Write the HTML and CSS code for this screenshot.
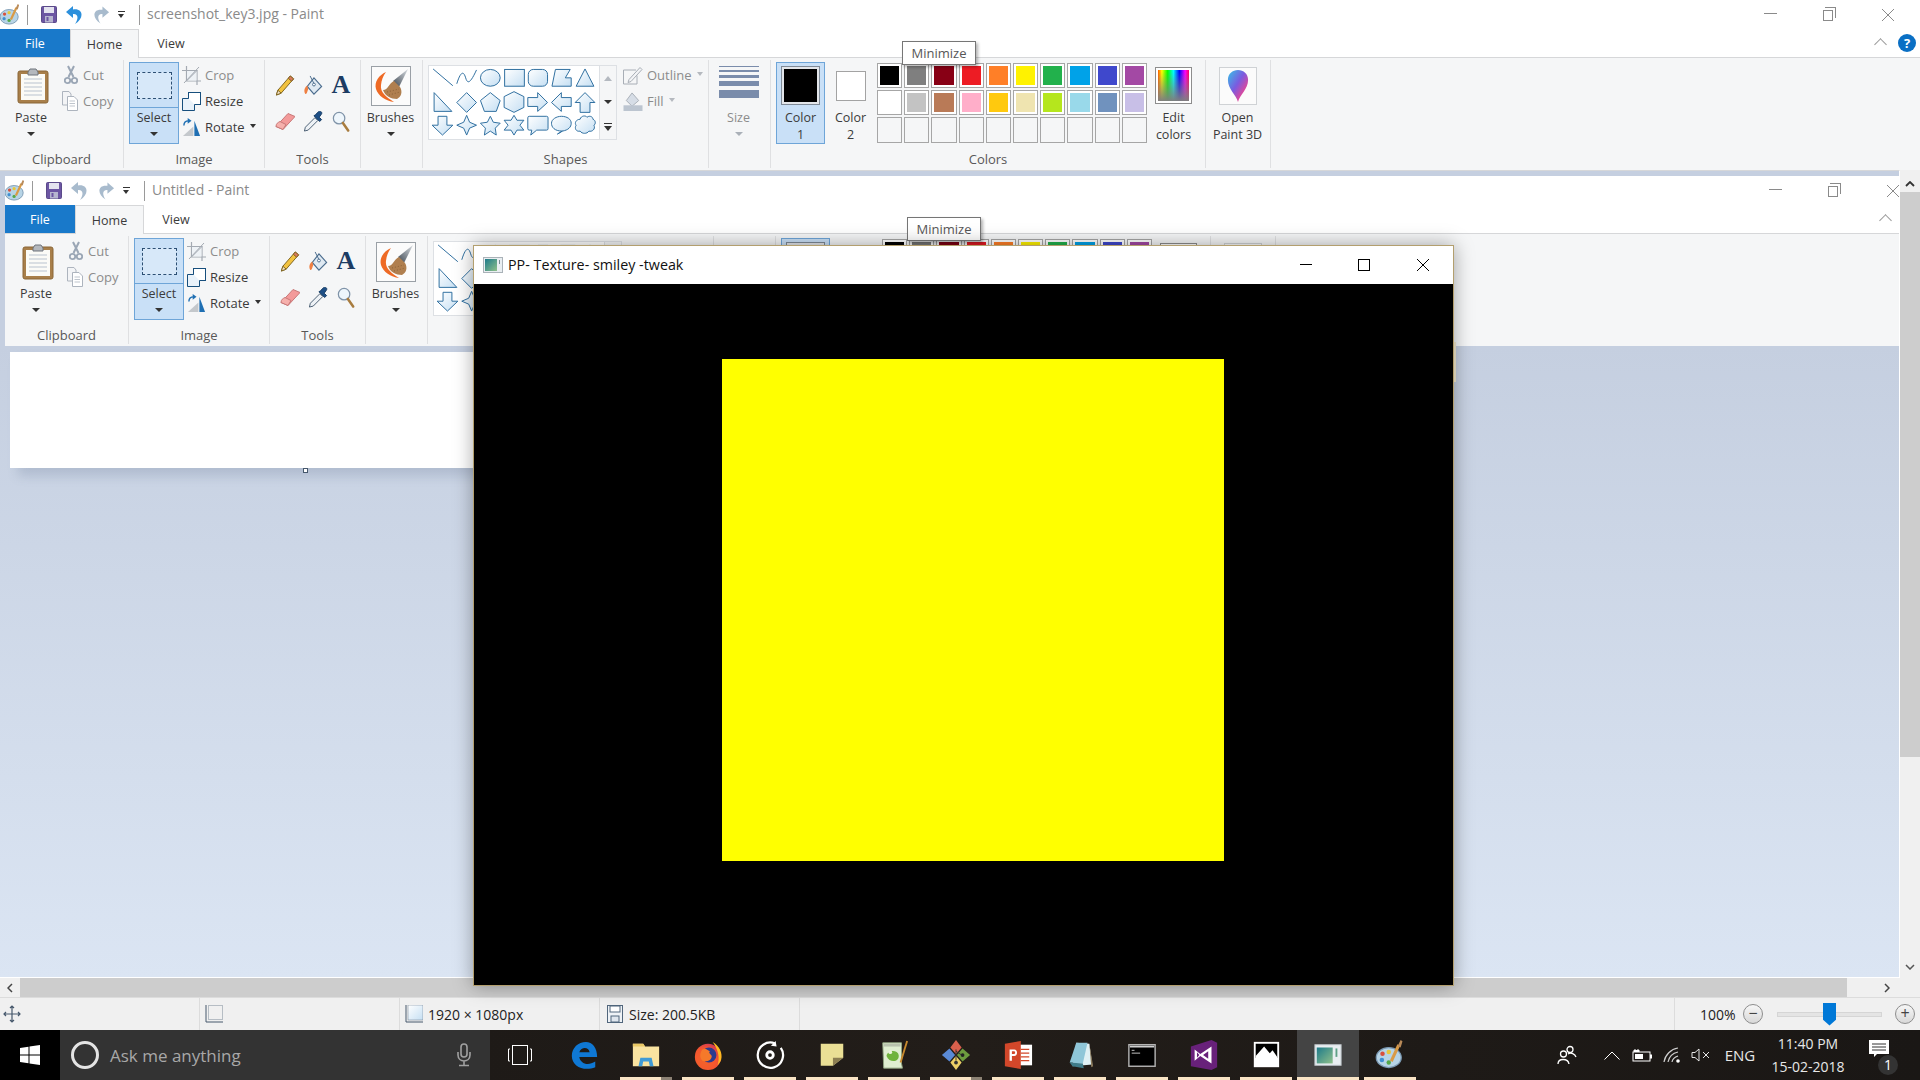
FILE: index.html
```html
<!DOCTYPE html>
<html lang="en">
<head>
<meta charset="utf-8">
<title>Paint</title>
<link rel="stylesheet" href="styles.css">
</head>
<body>
<svg class="sprite" aria-hidden="true">
  <defs>
    <linearGradient id="gShape" x1="0" y1="0" x2="1" y2="1"><stop offset="0" stop-color="#ffffff"/><stop offset="1" stop-color="#c5dff3"/></linearGradient>
    <linearGradient id="g3d" x1="0" y1="0" x2="1" y2="1"><stop offset="0" stop-color="#35c3e8"/><stop offset=".45" stop-color="#7a5be0"/><stop offset=".75" stop-color="#e0479a"/><stop offset="1" stop-color="#f08a30"/></linearGradient>
    <linearGradient id="gTeal" x1="0" y1="0" x2="1" y2="1"><stop offset="0" stop-color="#1d7a8a"/><stop offset="1" stop-color="#8fc08a"/></linearGradient>
    <linearGradient id="gHandle" x1="0" y1="1" x2="1" y2="0"><stop offset="0" stop-color="#3d4650"/><stop offset="1" stop-color="#d8dde2"/></linearGradient>
    <radialGradient id="gFox" cx=".35" cy=".65" r=".8"><stop offset="0" stop-color="#f2622a"/><stop offset=".6" stop-color="#f4562e"/><stop offset="1" stop-color="#c22a6a"/></radialGradient>
    <symbol id="logo" viewBox="0 0 22 24"><ellipse cx="10" cy="14" rx="10" ry="8" fill="#b7d4e6" stroke="#7a98b2"/><circle cx="5" cy="11" r="1.800" fill="#d8503c"/><circle cx="10" cy="9.500" r="1.800" fill="#e8c73a"/><circle cx="4.500" cy="16" r="1.800" fill="#3f8fd2"/><circle cx="10" cy="18" r="1.800" fill="#55a84a"/><path d="M12 17 L18 4" stroke="#d99a45" stroke-width="2.400"/><path d="M17 5 L19.500 0 L21 1 L19.500 6Z" fill="#b98a58"/></symbol>
    <symbol id="save" viewBox="0 0 16 17"><rect x=".5" y=".5" width="15" height="16" rx="1" fill="#6c56a3" stroke="#5b4a8a"/><rect x="3" y="1" width="10" height="6" fill="#e4e3ef"/><rect x="4" y="10" width="8" height="6.500" fill="#b7b6cf"/><rect x="5.500" y="11" width="2" height="4" fill="#6c56a3"/></symbol>
    <symbol id="undo" viewBox="0 0 18 20"><path d="M8 1 L1 7 L8 13 V9 C13 8.500 14 13 10 19 C19 14 19 3 8 4.500Z" fill="currentColor"/></symbol>
    <symbol id="redo" viewBox="0 0 18 20"><path d="M10 1 L17 7 L10 13 V9 C5 8.500 4 13 8 19 C-1 14 -1 3 10 4.500Z" fill="#a8bbcd"/></symbol>
    <symbol id="paste" viewBox="0 0 32 37"><rect x="1" y="4" width="30" height="32" rx="2" fill="#a87f4a" stroke="#8a6636"/><rect x="4" y="7" width="24" height="26" fill="#fbfbf7"/><path d="M7 12H25M7 16H25M7 20H25M7 24H25M7 28H25" stroke="#b9c3cf"/><path d="M11 5 L13 2 H19 L21 5 V8 H11Z" fill="#b4b8bd" stroke="#6f757c"/></symbol>
    <symbol id="cut" viewBox="0 0 14 20"><path d="M4 1 L9.500 12 M10 1 L4.500 12" stroke="#9aa6b5" stroke-width="2"/><circle cx="3.500" cy="15.500" r="2.700" fill="none" stroke="#9aa6b5" stroke-width="1.800"/><circle cx="10.500" cy="15.500" r="2.700" fill="none" stroke="#9aa6b5" stroke-width="1.800"/></symbol>
    <symbol id="copy" viewBox="0 0 16 20"><path d="M.5.5H7L9 3V14H.5Z" fill="#f3f4f6" stroke="#adb4be"/><path d="M5.500 5.500H12L15.500 9V19.500H5.500Z" fill="#fff" stroke="#adb4be"/><path d="M7.500 10H13M7.500 12.500H13M7.500 15H13" stroke="#bfc5cd"/></symbol>
    <symbol id="crop" viewBox="0 0 19 19"><path d="M4.500 0V15H19M0 4.500H15V19" fill="none" stroke="#a4aab2" stroke-width="1.200"/><rect x="5" y="5" width="9.500" height="9.500" fill="#eef2f6"/><path d="M4.500 15 L15 4.500 M17 1 L2 17" stroke="#a4aab2"/></symbol>
    <symbol id="resize" viewBox="0 0 19 19"><rect x="6.500" y=".5" width="12" height="12" fill="#fff" stroke="#174f7d"/><path d="M6.500 6.500H.5V18.500H12.500V12.500" fill="#e9f2fa" stroke="#174f7d"/></symbol>
    <symbol id="rotate" viewBox="0 0 20 20"><path d="M1 19 L12 9 V19Z" fill="#c4c8cc"/><path d="M13 3 L19 19 H13Z" fill="#1f6fb3"/><path d="M2 8 C2 4 4 3 7 3" fill="none" stroke="#1f6fb3" stroke-width="1.500"/><path d="M6 0 L10 3 L6 6Z" fill="#1f6fb3"/></symbol>
    <symbol id="pencil" viewBox="0 0 20 22"><path d="M15.500 1 L19 4 L6 19 L1 21 L2.500 16Z" fill="#f2c23f" stroke="#7d6320"/><path d="M15.500 1 L19 4 L17 6.500 L13.500 3.500Z" fill="#d97a5e" stroke="#7d6320"/><path d="M1 21 L2.500 16 L6 19Z" fill="#f3e2c8" stroke="#7d6320"/></symbol>
    <symbol id="bucket" viewBox="0 0 20 22"><path d="M11 3 L19 12 L11 20 L4 12Z" fill="#dfe9f2" stroke="#4a6c8d" stroke-width="1.200"/><path d="M7 1 L11 9" stroke="#4a6c8d"/><path d="M4 11 C1 13 0 17 2 20 C4 20 4 17 5 15Z" fill="#ef8043"/><circle cx="11" cy="10" r="1.500" fill="#fff" stroke="#4a6c8d"/></symbol>
    <symbol id="eraser" viewBox="0 0 20 18"><path d="M13 1 L20 4 L8 17 L1 14 Z" fill="#f39a9a" stroke="#c87878"/><path d="M1 14 C1 11 3 10 5 9 L11 12 L8 17Z" fill="#f6b0ac" stroke="#c87878"/></symbol>
    <symbol id="picker" viewBox="0 0 20 22"><path d="M12 7 L15 10 L5 20 L1 21 L2 17Z" fill="#eef2f6" stroke="#475b70"/><path d="M11 5 L17 11 L19 9 L16.500 6.500 L19 3 C20 1 17 -1 15.500 1 L12.500 4Z" fill="#1e4f86" stroke="#143a63"/></symbol>
    <symbol id="zoomglass" viewBox="0 0 18 22"><circle cx="7" cy="7.500" r="6" fill="#eef6fc" stroke="#7f93a8" stroke-width="1.300"/><path d="M11 12.500 L16.500 20.500" stroke="#a87c3f" stroke-width="2.600" stroke-linecap="round"/></symbol>
    <symbol id="brush" viewBox="0 0 40 40"><rect x=".5" y=".5" width="39" height="39" fill="#fbfbfb" stroke="#9aa0a6"/><path d="M37 3 L22 15 L28 21Z" fill="url(#gHandle)"/><path d="M15 6 C8 9 3 16 5 23 C7 30 15 35 23 36 C15 31 9 26 10 19 C10.500 14 12 10 15 6Z" fill="#ee6a25"/><path d="M12 24 C14 30 20 33 26 33 C30 31 32 26 29 21 L23 15 C18 17 17 24 12 24Z" fill="#b07f4f"/><path d="M16 26 L28 23 M18 29 L29 26" stroke="#8c6238" stroke-dasharray="1 2"/></symbol>
    <symbol id="shapes" viewBox="0 0 170 74"><g fill="url(#gShape)" stroke="#2f6f9f"><path d="M3 3 L23 20" fill="none"/><path d="M27 18 C31 5 34 5 36 12 S41 17 47 4" fill="none"/><ellipse cx="61" cy="12" rx="10" ry="8.500"/><rect x="75.500" y="3.500" width="20" height="17"/><rect x="99.500" y="3.500" width="19.500" height="17" rx="5"/><path d="M123.500 20.500 L127 3.500 H142 L137 12 H143 V20.500Z"/><path d="M157 3 L166 20.500 H148Z"/><path d="M4 27 V46 H22Z"/><path d="M37 27 L47 37 L37 47 L27 37Z"/><path d="M61 27 L71 35 L67 46 H55 L51 35Z"/><path d="M85 26 L95 31 V42 L85 47 L75 42 V31Z"/><path d="M99 32 H109 V27 L119 37 L109 46 V41 H99Z"/><path d="M143 32 H133 V27 L123 37 L133 46 V41 H143Z"/><path d="M157 27 L167 37 H162 V47 H152 V37 H147Z"/><path d="M8 51 H17 V60 H23 L12.500 70 L2 60 H8Z"/><path d="M37 50 L40 57 L47 60 L40 63 L37 70 L34 63 L27 60 L34 57Z"/><path d="M61 51 L64 57 L71 58 L66 63 L67 70 L61 66 L55 70 L56 63 L51 58 L58 57Z"/><path d="M85 50 L88 55 H95 L91 60 L95 65 H88 L85 70 L82 65 H75 L79 60 L75 55 H82Z"/><path d="M100.500 51 H118 Q119.500 51 119.500 52.500 V63.500 Q119.500 65 118 65 H108 L102 70 L103 65 H100.500 Q99 65 99 63.500 V52.500 Q99 51 100.500 51Z"/><path d="M134 66 C126 66 123 62 123 58 C123 54 128 51 133 51 C139 51 143 54 143 58 C143 62 140 65 134 66 L129 69Z"/><path d="M152 54 C153 50 158 50 159 52 C161 50 165 51 165 54 C168 55 168 59 166 60 C168 64 164 67 161 66 C159 69 154 69 152 66 C148 67 146 63 148 60 C146 58 148 54 152 54Z"/></g></symbol>
    <symbol id="outline" viewBox="0 0 20 18"><path d="M.5 3.500H13M.5 3.500V17.500H14V9" fill="none" stroke="#a8aeb6"/><path d="M6 13 L17 1 L19 3 L8 15 L5 16Z" fill="#f3f4f6" stroke="#a8aeb6"/></symbol>
    <symbol id="fillshape" viewBox="0 0 20 20"><path d="M9 1 L16 9 L9 15 L3 9Z" fill="#d6dde6" stroke="#a8aeb6"/><rect y="14" width="20" height="6" fill="#bcc5d0"/></symbol>
    <symbol id="drop" viewBox="0 0 24 36"><path d="M12 36 C10 28 1 22 1 12 C1 5 6 1 12 1 C18 1 23 5 23 12 C23 22 14 28 12 36Z" fill="url(#g3d)"/></symbol>
    <symbol id="pp" viewBox="0 0 20 16"><rect x=".5" y=".5" width="19" height="15" fill="#e9eef1" stroke="#aab2b8"/><rect x="2" y="2" width="12" height="12" fill="url(#gTeal)"/><path d="M16.500 3V7" stroke="#7a8a94"/></symbol>
    <symbol id="win" viewBox="0 0 20 20"><path d="M0 3 L8.500 1.700 V9.500 H0Z M9.500 1.500 L20 0 V9.500 H9.500Z M0 10.500 H8.500 V18.300 L0 17Z M9.500 10.500 H20 V20 L9.500 18.500Z" fill="#fff"/></symbol>
    <symbol id="mic" viewBox="0 0 16 24"><rect x="5" y="1" width="6" height="13" rx="3" fill="none" stroke="#a0a0a0" stroke-width="1.600"/><path d="M2 9 V12 C2 20 14 20 14 12 V9 M8 18 V22 M3 22.500H13" fill="none" stroke="#a0a0a0" stroke-width="1.600"/></symbol>
    <symbol id="taskview" viewBox="0 0 24 20"><rect x="4.500" y=".5" width="15" height="19" fill="none" stroke="#fff"/><path d="M2 4 H.5 V16 H2 M22 4 H23.500 V16 H22" fill="none" stroke="#fff"/></symbol>
    <symbol id="edge" viewBox="0 0 32 32"><path fill-rule="evenodd" d="M3 17 C3 8 10 2 18 2 C25 2 30 8 30 18 H11 C12 25 20 28 28 23 V29 C16 34 3 28 3 17Z M11 13 H22 C21 7 13 7 11 13Z" fill="#0f78d4"/></symbol>
    <symbol id="folder" viewBox="0 0 32 32"><path d="M2 4 H13 L15 7 H30 V28 H2Z" fill="#f9e3a0"/><path d="M2 4 H13 L15 7 H2Z" fill="#e9c865"/><path d="M8 28 L10 19 H22 L24 28 H20 L19 23 H13 L12 28Z" fill="#3f9bd6"/></symbol>
    <symbol id="firefox" viewBox="0 0 32 32"><circle cx="16" cy="18" r="14" fill="url(#gFox)"/><path d="M21 2 C28 6 32 14 30 21 C29 24 27 26 26 27 C29 20 27 10 21 2Z" fill="#ffb820"/><circle cx="17" cy="16" r="8" fill="#2b3a8f"/><path d="M10 10 C14 8 15 11 18 12 C16 14 19 15 20 17 C20 22 14 24 10 22 C7 19 7 14 10 10Z" fill="#f5792a"/></symbol>
    <symbol id="groove" viewBox="0 0 32 32"><path d="M21 3.500 A13.500 13.500 0 1 0 27.500 8.500" fill="none" stroke="#fff" stroke-width="2.400"/><path d="M17 6 L22 1 L23 7Z" fill="#fff"/><circle cx="16" cy="16" r="3.500" fill="none" stroke="#fff" stroke-width="3"/></symbol>
    <symbol id="sticky" viewBox="0 0 32 32"><path d="M4 4 H28 V19 L17 27.500 H4Z" fill="#eadf95"/><path d="M28 19 L17 27.500 V19Z" fill="#8c7e52"/></symbol>
    <symbol id="npp" viewBox="0 0 32 32"><path d="M4 3 H24 V25 L25 30 H5Z" fill="#dfeed0" stroke="#90a480"/><path d="M5 4H23V7H5Z" fill="#b8c2ad"/><path d="M8 17 C9 10 20 10 21 16 C22 24 11 25 8 17Z" fill="#6fb33c"/><circle cx="12" cy="13" r="2" fill="#eaf3dc"/><path d="M30 1 L23 24" stroke="#c88a2e" stroke-width="2"/></symbol>
    <symbol id="git" viewBox="0 0 32 32"><path d="M16 0 L22 8 L16 15 L10 8Z" fill="#d9604c"/><path d="M9 9 L15 16 L9 23 L1 16Z" fill="#5a8ad6"/><path d="M23 9 L31 16 L23 23 L17 16Z" fill="#6d9c3f"/><path d="M16 17 L22 24 L16 32 L10 24Z" fill="#edd066"/><circle cx="16" cy="24" r="2" fill="#333"/><circle cx="23" cy="16" r="2" fill="#222"/><path d="M16 10 V22 M16 12 L22 16" stroke="#333"/></symbol>
    <symbol id="ppt" viewBox="0 0 32 32"><rect x="13" y="5" width="18" height="22" fill="#fff"/><path d="M19 10H28M19 14H28M19 18H28M19 22H28" stroke="#d2472a" stroke-width="1.500"/><path d="M2 4 L19 1 V31 L2 28Z" fill="#d2472a"/><path d="M7 22 V10 H12 C16 10 16 17 12 17 H9.500 V22Z M9.500 12 V15 H11.500 C13.500 15 13.500 12 11.500 12Z" fill="#fff" fill-rule="evenodd"/></symbol>
    <symbol id="notepad" viewBox="0 0 32 32"><path d="M12 3 L26 4 L29 26 L8 28Z" fill="#dff0f4"/><path d="M12 3 L24 3 L19 25 L5 24Z" fill="#8fc6d8"/><path d="M5 24 L19 25 L20 30 L8 28Z" fill="#3f7c8a"/><path d="M26 4 L30 28 L28 29Z" fill="#8a7a5c"/></symbol>
    <symbol id="cmd" viewBox="0 0 32 32"><rect x="2" y="5" width="28" height="23" fill="#000" stroke="#b5b5b5" stroke-width="1.500"/><rect x="3" y="6" width="26" height="2" fill="#cfcfcf"/><path d="M5 11 H8 M5 14 H14" stroke="#ccc"/></symbol>
    <symbol id="vs" viewBox="0 0 32 32"><path d="M2 7 L24 0 L30 3 V29 L24 32 L2 28Z" fill="#68217a"/><path d="M6 10 L12 15 L24 7 V25 L12 17 L6 22Z M8.500 13 V19 L11 16Z M15 16 L20.500 20 V12Z" fill="#fff" fill-rule="evenodd"/></symbol>
    <symbol id="photos" viewBox="0 0 32 32"><rect x="3" y="2" width="27" height="27" fill="#fff"/><rect x="5" y="4" width="23" height="15" fill="#000"/><path d="M5 17 L14 7 L20 14 L23 11 L28 18 V24 H5Z" fill="#fff"/></symbol>
    <symbol id="ppicon" viewBox="0 0 32 32"><rect x="2" y="5" width="28" height="22" fill="#e9eef1" stroke="#b8bfc4"/><rect x="4" y="8" width="17" height="17" fill="url(#gTeal)"/><path d="M25 9V18" stroke="#5fa086" stroke-width="2"/></symbol>
    <symbol id="people" viewBox="0 0 20 20"><circle cx="13" cy="4.500" r="3" fill="none" stroke="#fff" stroke-width="1.300"/><circle cx="6.500" cy="9" r="3" fill="none" stroke="#fff" stroke-width="1.300"/><path d="M1 19 C1 13 11 13 12 19 M11 9 C14 7 18 9 19 12" fill="none" stroke="#fff" stroke-width="1.300"/></symbol>
    <symbol id="battery" viewBox="0 0 20 14"><path d="M3 1 V4 M6 1 V4" stroke="#fff"/><rect x="1" y="4" width="17" height="9" fill="none" stroke="#fff"/><rect x="3" y="6" width="8" height="5" fill="#fff"/><rect x="18" y="6.500" width="2" height="4" fill="#fff"/><path d="M1.500 3 H7.500" stroke="#fff" stroke-width="2"/></symbol>
    <symbol id="wifi" viewBox="0 0 18 16"><path d="M1 15 C2 8 8 2 15 1 M5 15 C6 10 10 6 15 5 M9 15 C9.500 12 12 10 15 9" fill="none" stroke="#cfcfcf" stroke-width="1.200"/><circle cx="15" cy="14" r="1.800" fill="#fff"/></symbol>
    <symbol id="mute" viewBox="0 0 20 14"><path d="M1 4.500 H4 L8 1 V13 L4 9.500 H1Z" fill="none" stroke="#e6e6e6"/><path d="M12 4 L18 10 M18 4 L12 10" stroke="#e6e6e6"/></symbol>
    <symbol id="bubble" viewBox="0 0 20 18"><path d="M0 0 H20 V14 H8 L5 17 V14 H0Z" fill="#fff"/><path d="M3 4H17M3 7H17M3 10H17" stroke="#333"/></symbol>
    <symbol id="move" viewBox="0 0 18 18"><path d="M9 1 V17 M1 9 H17 M7 3 L9 1 L11 3 M7 15 L9 17 L11 15 M3 7 L1 9 L3 11 M15 7 L17 9 L15 11" fill="none" stroke="#46586c" stroke-width="1.200"/></symbol>
    <symbol id="selsize" viewBox="0 0 18 18"><path d="M1 0V17H18" fill="none" stroke="#46586c"/><rect x="3.500" y=".5" width="14" height="14" fill="none" stroke="#7d8a99" stroke-dasharray="1 1"/></symbol>
    <symbol id="imgsize" viewBox="0 0 18 18"><path d="M1 0V17H18" fill="none" stroke="#46586c"/><rect x="3" y="0" width="15" height="15" fill="url(#gShape)" stroke="#7d8a99" stroke-width=".6"/></symbol>
    <symbol id="disk" viewBox="0 0 16 18"><rect x=".5" y=".5" width="15" height="17" fill="#eef2f6" stroke="#51667c"/><rect x="3" y="1" width="10" height="6" fill="#fff" stroke="#51667c"/><rect x="4" y="11" width="8" height="6" fill="#dfe6ee" stroke="#51667c"/></symbol>
  </defs>
</svg>

<main class="desktop">
  <section class="paint">
    <header class="titlebar">
      <svg class="i-logo"><use href="#logo"/></svg><span class="qat-sep"></span>
      <svg class="i-save"><use href="#save"/></svg>
      <svg class="i-undo on"><use href="#undo"/></svg>
      <svg class="i-redo"><use href="#redo"/></svg>
      <span class="qat-more"></span><span class="qat-sep2"></span>
      <span class="title-text">screenshot_key3.jpg - Paint</span>
      <div class="controls">
        <span class="ctl"><span class="ctl-min"></span></span>
        <span class="ctl"><span class="ctl-restore"></span></span>
        <span class="ctl"><svg class="ctl-x" viewBox="0 0 12 12"><path d="M0 0L12 12M12 0L0 12" stroke="#8a8a8a"/></svg></span>
      </div>
    </header>
    <nav class="tabs">
      <span class="tab-file">File</span><span class="tab-home">Home</span><span class="tab-view">View</span>
      <span class="chevron-up"></span><span class="help">?</span>
    </nav>
    <div class="ribbon">
      <div class="group g-clip"><div class="group-body">
        <div class="large w-paste"><div class="large-top"><svg class="i-paste"><use href="#paste"/></svg></div><span class="lbl">Paste</span><span class="caret"></span></div>
        <div class="small-col sc-clip"><div class="small dis"><svg class="i-cut"><use href="#cut"/></svg>Cut</div><div class="small dis"><svg class="i-copy"><use href="#copy"/></svg>Copy</div></div>
      </div><div class="group-label">Clipboard</div></div>
      <div class="group g-image"><div class="group-body">
        <div class="large selected w-select"><div class="large-top split"><span class="dashed"></span></div><span class="lbl">Select</span><span class="caret"></span></div>
        <div class="small-col sc-image"><div class="small dis"><svg class="i-19"><use href="#crop"/></svg>Crop</div><div class="small"><svg class="i-19"><use href="#resize"/></svg>Resize</div><div class="small"><svg class="i-19"><use href="#rotate"/></svg>Rotate<span class="caret-inline"></span></div></div>
      </div><div class="group-label">Image</div></div>
      <div class="group g-tools"><div class="tool-grid">
        <svg class="i-tool"><use href="#pencil"/></svg><svg class="i-tool"><use href="#bucket"/></svg><span class="tool-a">A</span>
        <svg class="i-tool"><use href="#eraser"/></svg><svg class="i-tool"><use href="#picker"/></svg><svg class="i-tool"><use href="#zoomglass"/></svg>
      </div><div class="group-label">Tools</div></div>
      <div class="group g-brushes"><div class="group-body">
        <div class="large w-fill"><div class="large-top"><svg class="i-brush"><use href="#brush"/></svg></div><span class="lbl">Brushes</span><span class="caret"></span></div>
      </div><div class="group-label">&nbsp;</div></div>
      <div class="group g-shapes"><div class="group-body">
        <div class="gallery"><svg class="i-shapes"><use href="#shapes"/></svg><div class="gallery-scroll"><span class="tri-up"></span><span class="tri-down"></span><span class="tri-more"></span></div></div>
        <div class="small-col sc-shape"><div class="small dis"><svg class="i-outline"><use href="#outline"/></svg>Outline<span class="caret-inline light"></span></div><div class="small dis"><svg class="i-outline"><use href="#fillshape"/></svg>Fill<span class="caret-inline light"></span></div></div>
      </div><div class="group-label">Shapes</div></div>
      <div class="group g-size"><div class="group-body">
        <div class="large w-fill dis"><div class="size-lines"><span class="sl1"></span><span class="sl2"></span><span class="sl3"></span><span class="sl5"></span><span class="sl8"></span></div><span class="lbl">Size</span><span class="caret light"></span></div>
      </div><div class="group-label">&nbsp;</div></div>
      <div class="group g-colors"><div class="group-body">
        <div class="large selected w-color1"><div class="large-top plain"><span class="swatch1"></span></div><span class="lbl">Color</span><span class="lbl">1</span></div>
        <div class="large w-color2"><div class="large-top plain"><span class="swatch2"></span></div><span class="lbl">Color</span><span class="lbl">2</span></div>
        <div class="palette">
          <span class="c c1"></span><span class="c c2"></span><span class="c c3"></span><span class="c c4"></span><span class="c c5"></span><span class="c c6"></span><span class="c c7"></span><span class="c c8"></span><span class="c c9"></span><span class="c c10"></span>
          <span class="c c11"></span><span class="c c12"></span><span class="c c13"></span><span class="c c14"></span><span class="c c15"></span><span class="c c16"></span><span class="c c17"></span><span class="c c18"></span><span class="c c19"></span><span class="c c20"></span>
          <span class="c"></span><span class="c"></span><span class="c"></span><span class="c"></span><span class="c"></span><span class="c"></span><span class="c"></span><span class="c"></span><span class="c"></span><span class="c"></span>
        </div>
        <div class="large w-edit"><div class="large-top plain"><span class="rainbow"></span></div><span class="lbl">Edit</span><span class="lbl">colors</span></div>
      </div><div class="group-label">Colors</div></div>
      <div class="group g-3d"><div class="group-body">
        <div class="large w-fill"><div class="large-top plain"><span class="tile3d"><svg class="i-drop"><use href="#drop"/></svg></span></div><span class="lbl">Open</span><span class="lbl">Paint 3D</span></div>
      </div><div class="group-label">&nbsp;</div></div>
      <div class="tooltip">Minimize</div>
    </div>

    <div class="workspace">
      <div class="work-left gradient">
        <section class="paint inner">
          <header class="titlebar">
            <svg class="i-logo"><use href="#logo"/></svg><span class="qat-sep"></span>
            <svg class="i-save"><use href="#save"/></svg>
            <svg class="i-undo"><use href="#undo"/></svg>
            <svg class="i-redo"><use href="#redo"/></svg>
            <span class="qat-more"></span><span class="qat-sep2"></span>
            <span class="title-text">Untitled - Paint</span>
            <div class="controls">
              <span class="ctl"><span class="ctl-min"></span></span>
              <span class="ctl"><span class="ctl-restore"></span></span>
              <span class="ctl"><svg class="ctl-x" viewBox="0 0 12 12"><path d="M0 0L12 12M12 0L0 12" stroke="#8a8a8a"/></svg></span>
            </div>
          </header>
          <nav class="tabs tabs-inner">
            <span class="tab-file">File</span><span class="tab-home">Home</span><span class="tab-view">View</span>
            <span class="chevron-up"></span>
          </nav>
          <div class="ribbon">
            <div class="group g-clip"><div class="group-body">
              <div class="large w-paste"><div class="large-top"><svg class="i-paste"><use href="#paste"/></svg></div><span class="lbl">Paste</span><span class="caret"></span></div>
              <div class="small-col sc-clip"><div class="small dis"><svg class="i-cut"><use href="#cut"/></svg>Cut</div><div class="small dis"><svg class="i-copy"><use href="#copy"/></svg>Copy</div></div>
            </div><div class="group-label">Clipboard</div></div>
            <div class="group g-image"><div class="group-body">
              <div class="large selected w-select"><div class="large-top split"><span class="dashed"></span></div><span class="lbl">Select</span><span class="caret"></span></div>
              <div class="small-col sc-image"><div class="small dis"><svg class="i-19"><use href="#crop"/></svg>Crop</div><div class="small"><svg class="i-19"><use href="#resize"/></svg>Resize</div><div class="small"><svg class="i-19"><use href="#rotate"/></svg>Rotate<span class="caret-inline"></span></div></div>
            </div><div class="group-label">Image</div></div>
            <div class="group g-tools"><div class="tool-grid">
              <svg class="i-tool"><use href="#pencil"/></svg><svg class="i-tool"><use href="#bucket"/></svg><span class="tool-a">A</span>
              <svg class="i-tool"><use href="#eraser"/></svg><svg class="i-tool"><use href="#picker"/></svg><svg class="i-tool"><use href="#zoomglass"/></svg>
            </div><div class="group-label">Tools</div></div>
            <div class="group g-brushes"><div class="group-body">
              <div class="large w-fill"><div class="large-top"><svg class="i-brush"><use href="#brush"/></svg></div><span class="lbl">Brushes</span><span class="caret"></span></div>
            </div><div class="group-label">&nbsp;</div></div>
            <div class="group g-shapes"><div class="group-body">
              <div class="gallery"><svg class="i-shapes"><use href="#shapes"/></svg><div class="gallery-scroll"></div></div>
            </div><div class="group-label">&nbsp;</div></div>
            <div class="group g-size"><div class="group-body"></div><div class="group-label">&nbsp;</div></div>
            <div class="group g-colors"><div class="group-body">
              <div class="large selected w-color1"><div class="large-top plain"><span class="swatch1"></span></div></div>
              <div class="large w-color2"><div class="large-top plain"><span class="swatch2"></span></div></div>
              <div class="palette">
                <span class="c c1"></span><span class="c c2"></span><span class="c c3"></span><span class="c c4"></span><span class="c c5"></span><span class="c c6"></span><span class="c c7"></span><span class="c c8"></span><span class="c c9"></span><span class="c c10"></span>
              </div>
              <div class="large w-edit"><div class="large-top plain"><span class="rainbow"></span></div></div>
            </div><div class="group-label">&nbsp;</div></div>
            <div class="group g-3d"><div class="group-body">
              <div class="large w-fill"><div class="large-top plain"><span class="tile3d"></span></div></div>
            </div><div class="group-label">&nbsp;</div></div>
            <div class="tooltip">Minimize</div>
          </div>
          <div class="canvas-area gradient"><div class="canvas"><span class="handle"></span></div></div>
        </section>
      </div>
      <aside class="vscroll">
        <span class="arrow-btn"><svg class="chev" viewBox="0 0 10 6"><path d="M1 5L5 1L9 5" fill="none" stroke="#333" stroke-width="1.800"/></svg></span>
        <span class="vthumb"></span>
        <span class="arrow-btn end"><svg class="chev" viewBox="0 0 10 6"><path d="M1 1L5 5L9 1" fill="none" stroke="#555" stroke-width="1.500"/></svg></span>
      </aside>
    </div>

    <div class="hscroll">
      <span class="harrow"><svg class="chev-h" viewBox="0 0 6 10"><path d="M5 1L1 5L5 9" fill="none" stroke="#444" stroke-width="1.500"/></svg></span>
      <span class="hthumb"></span>
      <span class="harrow right"><svg class="chev-h" viewBox="0 0 6 10"><path d="M1 1L5 5L1 9" fill="none" stroke="#444" stroke-width="1.500"/></svg></span>
    </div>

    <footer class="status">
      <div class="cell cell-200"><svg class="i-status"><use href="#move"/></svg></div>
      <div class="cell cell-200"><svg class="i-status"><use href="#selsize"/></svg></div>
      <div class="cell cell-200"><svg class="i-status"><use href="#imgsize"/></svg>1920 × 1080px</div>
      <div class="cell cell-size"><svg class="i-status"><use href="#disk"/></svg>Size: 200.5KB</div>
      <div class="cell cell-grow"></div>
      <div class="zoombox">
        <span class="pct">100%</span>
        <span class="round">−</span>
        <span class="slider"><span class="knob"></span></span>
        <span class="round">+</span>
      </div>
    </footer>
  </section>

  <footer class="taskbar">
    <div class="start"><svg class="i-win"><use href="#win"/></svg></div>
    <div class="search">
      <span class="cortana"></span>
      <span class="ask">Ask me anything</span>
      <svg class="i-mic"><use href="#mic"/></svg>
    </div>
    <div class="taskview"><svg class="i-taskview"><use href="#taskview"/></svg></div>
    <div class="apps">
      <span class="app"><svg class="i-app"><use href="#edge"/></svg></span>
      <span class="app run double"><svg class="i-app"><use href="#folder"/></svg></span>
      <span class="app run"><svg class="i-app"><use href="#firefox"/></svg></span>
      <span class="app run"><svg class="i-app"><use href="#groove"/></svg></span>
      <span class="app run"><svg class="i-app"><use href="#sticky"/></svg></span>
      <span class="app run"><svg class="i-app"><use href="#npp"/></svg></span>
      <span class="app run double"><svg class="i-app"><use href="#git"/></svg></span>
      <span class="app run"><svg class="i-app"><use href="#ppt"/></svg></span>
      <span class="app run"><svg class="i-app"><use href="#notepad"/></svg></span>
      <span class="app run"><svg class="i-app"><use href="#cmd"/></svg></span>
      <span class="app run"><svg class="i-app"><use href="#vs"/></svg></span>
      <span class="app run"><svg class="i-app"><use href="#photos"/></svg></span>
      <span class="app run active"><svg class="i-app"><use href="#ppicon"/></svg></span>
      <span class="app run"><svg class="i-app"><use href="#logo"/></svg></span>
    </div>
    <div class="tray">
      <span class="t-people"><svg class="i-people"><use href="#people"/></svg></span>
      <span class="t-chev"><svg class="i-trayup" viewBox="0 0 16 9"><path d="M.5 8.500L8 1L15.500 8.500" fill="none" stroke="#fff"/></svg></span>
      <span class="t-30"><svg class="i-battery"><use href="#battery"/></svg></span>
      <span class="t-30"><svg class="i-wifi"><use href="#wifi"/></svg></span>
      <span class="t-28"><svg class="i-battery"><use href="#mute"/></svg></span>
      <span class="t-eng">ENG</span>
      <span class="t-clock"><span>11:40 PM</span><span>15-02-2018</span></span>
      <span class="t-notif"><svg class="i-bubble"><use href="#bubble"/></svg><span class="badge">1</span></span>
    </div>
  </footer>

  <section class="pp-window">
    <header class="pp-title">
      <svg class="i-pp"><use href="#pp"/></svg>
      <span class="pp-text">PP- Texture- smiley -tweak</span>
      <div class="pp-controls">
        <span class="pp-ctl"><span class="pp-min"></span></span>
        <span class="pp-ctl"><span class="pp-max"></span></span>
        <span class="pp-ctl"><svg class="pp-x" viewBox="0 0 12 12"><path d="M0 0L12 12M12 0L0 12" stroke="#000"/></svg></span>
      </div>
    </header>
    <div class="pp-view"><div class="yellow"></div></div>
  </section>
</main>
</body>
</html>
```

FILE: styles.css
```css
* { box-sizing: border-box; }
html, body { margin: 0; padding: 0; }
body { width: 1920px; height: 1080px; overflow: hidden; font-family: "Open Sans", "Noto Sans", sans-serif; font-size: 12px; color: #3b3b3b; background: #fff; }
svg { display: block; flex: none; }
.sprite { position: absolute; width: 0; height: 0; }

.desktop { position: relative; width: 1920px; height: 1080px; display: flex; flex-direction: column; }
.paint { width: 1920px; height: 1030px; display: flex; flex-direction: column; background: #fff; flex: none; }
.paint.inner { height: 801px; margin-left: 5px; margin-top: -1px; }

/* title bar */
.titlebar { height: 29px; display: flex; align-items: center; background: #fff; flex: none; }
.i-logo { width: 20px; height: 22px; }
.qat-sep { width: 1px; height: 20px; margin-left: 7px; background: #9a9a9a; }
.i-save { width: 16px; height: 17px; margin-left: 13px; }
.i-undo { width: 18px; height: 20px; margin-left: 8px; color: #a8bbcd; }
.i-undo.on { color: #2c90dc; }
.i-redo { width: 17px; height: 20px; margin-left: 10px; }
.qat-more { width: 7px; height: 7px; margin-left: 8px; border-top: 1px solid #333; position: relative; }
.qat-more::after { content: ""; position: absolute; left: 0; top: 2px; border-left: 3.5px solid transparent; border-right: 3.5px solid transparent; border-top: 4px solid #333; }
.qat-sep2 { width: 1px; height: 20px; margin-left: 14px; background: #9a9a9a; }
.title-text { margin-left: 7px; margin-bottom: 2px; font-size: 14px; color: #8a8a8a; white-space: nowrap; }
.controls { margin-left: auto; padding-right: 3px; display: flex; }
.ctl { width: 58.5px; height: 29px; display: flex; align-items: center; justify-content: center; }
.ctl-min { width: 13px; height: 1px; background: #8a8a8a; margin-bottom: 2px; }
.ctl-restore { width: 10px; height: 11px; margin-top: 2px; margin-right: 2px; border: 1px solid #8a8a8a; position: relative; background: #fff; }
.ctl-restore::before { content: ""; position: absolute; left: 1px; top: -4px; width: 10px; height: 10px; border-top: 1px solid #8a8a8a; border-right: 1px solid #8a8a8a; }
.ctl-x { width: 12px; height: 12px; }

/* tabs */
.tabs { height: 29px; display: flex; align-items: stretch; border-bottom: 1px solid #d6d7d9; padding-right: 4px; flex: none; background: #fff; font-size: 12.5px; }
.tabs-inner { padding-right: 29px; }
.tab-file { width: 70px; background: #1979ca; color: #fff; display: flex; align-items: center; justify-content: center; }
.tab-home { width: 69px; height: 29px; background: #f5f6f7; border: 1px solid #d6d7d9; border-bottom: 0; display: flex; align-items: center; justify-content: center; }
.tab-view { width: 64px; display: flex; align-items: center; justify-content: center; }
.chevron-up { margin-left: auto; width: 20px; position: relative; }
.chevron-up::before { content: ""; position: absolute; left: 5px; top: 11px; width: 8px; height: 8px; border-left: 1px solid #999; border-top: 1px solid #999; transform: rotate(45deg); }
.help { width: 18px; height: 18px; margin: 5px 0 0 7px; border-radius: 50%; background: #0a6fc4; color: #fff; font-weight: 700; font-size: 13px; line-height: 18px; text-align: center; }

/* ribbon */
.ribbon { position: relative; height: 112px; background: #f5f6f7; display: flex; flex: none; }
.group { height: 108px; margin-top: 2px; border-right: 1px solid #dfe0e2; display: flex; flex-direction: column; flex: none; }
.group-body { height: 91px; display: flex; align-items: flex-start; flex: none; }
.group-label { height: 17px; line-height: 17px; text-align: center; color: #585858; font-size: 13px; }
.g-clip { width: 124px; }
.g-image { width: 141px; }
.g-tools { width: 96px; }
.g-brushes { width: 62px; padding-right: 2px; }
.g-shapes { width: 286px; }
.g-size { width: 62px; padding-right: 2px; }
.g-colors { width: 435px; }
.g-3d { width: 65px; padding-right: 1px; }

.large { height: 82px; margin-top: 2px; display: flex; flex-direction: column; align-items: center; border: 1px solid transparent; flex: none; }
.large .lbl { line-height: 17px; white-space: nowrap; font-size: 12.5px; }
.large-top { height: 45px; width: 100%; display: flex; align-items: center; justify-content: center; flex: none; margin-bottom: 1px; }
.split { border-bottom: 1px solid #6ea5d8; }
.selected { background: #c9e0f7; border-color: #6ea5d8; }
.w-paste { width: 46px; margin-left: 8px; }
.w-paste .large-top { padding-left: 3px; }
.w-select { width: 50px; margin-left: 5px; }
.w-fill { width: 100%; }
.w-color1 { width: 49px; margin-left: 5px; }
.w-color2 { width: 49px; margin-left: 1px; }
.w-edit { width: 47px; margin-left: 1px; }
.caret { width: 0; height: 17px; border-left: 4px solid transparent; border-right: 4px solid transparent; position: relative; }
.caret::after { content: ""; position: absolute; left: -4px; top: 6px; border-left: 4px solid transparent; border-right: 4px solid transparent; border-top: 4px solid #333; }
.caret.light::after { border-top-color: #aab0b8; }
.caret-inline { display: inline-block; margin-left: 5px; margin-bottom: 3px; border-left: 3.5px solid transparent; border-right: 3.5px solid transparent; border-top: 4px solid #333; }
.caret-inline.light { border-top-color: #b5b9bf; }
.dis .lbl, .small.dis { color: #8c8c8c; }

.small-col { display: flex; flex-direction: column; padding-top: 2px; flex: none; }
.small { height: 26px; display: flex; align-items: center; white-space: nowrap; font-size: 13px; }
.sc-clip { margin-left: 8px; }
.sc-clip .small svg { margin-right: 5px; }
.sc-image { margin-left: 3px; }
.sc-image .small svg { margin-right: 4px; }
.sc-shape { margin-left: 6px; }
.sc-shape .small svg { margin-right: 4px; }

.i-paste { width: 32px; height: 37px; }
.i-cut { width: 14px; height: 20px; margin-left: 2px; }
.i-copy { width: 16px; height: 20px; }
.i-19 { width: 19px; height: 19px; }
.i-outline { width: 20px; height: 19px; }
.dashed { width: 35px; height: 27px; border: 1px dashed #2c4f74; background: #d7e8f9; }

.tool-grid { height: 91px; flex: none; padding: 7px 0 0 6px; display: grid; grid-template-columns: repeat(3, 28px); grid-template-rows: repeat(2, 36px); align-items: center; justify-items: center; }
.i-tool { width: 20px; height: 21px; }
.tool-a { font-family: "Liberation Serif", serif; font-weight: 700; font-size: 26px; line-height: 28px; color: #1c3c63; }
.i-brush { width: 40px; height: 40px; margin-top: 1px; }

.gallery { width: 189px; height: 75px; margin: 5px 0 0 5px; display: flex; background: #fff; border: 1px solid #dde0e4; flex: none; }
.i-shapes { width: 170px; height: 73px; }
.gallery-scroll { flex: 1; background: #f5f6f7; border-left: 1px solid #dde0e4; display: grid; grid-template-rows: repeat(3, 1fr); justify-items: center; align-items: center; }
.tri-up { border-left: 4px solid transparent; border-right: 4px solid transparent; border-bottom: 5px solid #b4b9c0; }
.tri-down { border-left: 4px solid transparent; border-right: 4px solid transparent; border-top: 4px solid #333; }
.tri-more { width: 8px; border-top: 1px solid #333; padding-top: 2px; position: relative; height: 7px; }
.tri-more::after { content: ""; position: absolute; left: 0; top: 2px; border-left: 4px solid transparent; border-right: 4px solid transparent; border-top: 5px solid #333; }

.size-lines { height: 45px; padding-top: 3px; margin-bottom: 1px; display: flex; flex-direction: column; width: 40px; flex: none; }
.size-lines span { display: block; background: #7a8cab; flex: none; }
.sl1 { height: 1px; margin-bottom: 3px; }
.sl2 { height: 2px; margin-bottom: 3px; }
.sl3 { height: 3px; margin-bottom: 3px; }
.sl5 { height: 5px; margin-bottom: 4px; }
.sl8 { height: 8px; }

.swatch1 { width: 39px; height: 39px; background: #000; border: 1px solid #7f8a97; box-shadow: inset 0 0 0 2px #e3e6ea; }
.swatch2 { width: 30px; height: 30px; background: #fff; border: 1px solid #a3a3a3; }

.palette { width: 272px; margin: 3px 0 0 2px; display: grid; grid-template-columns: repeat(10, 25.2px); column-gap: 2px; grid-template-rows: 25px 25px 26px; row-gap: 2px; flex: none; }
.c { border: 1px solid #a6a6a6; }
.c1,.c2,.c3,.c4,.c5,.c6,.c7,.c8,.c9,.c10,.c11,.c12,.c13,.c14,.c15,.c16,.c17,.c18,.c19,.c20 { box-shadow: inset 0 0 0 2px #fff; }
.c1 { background: #000; } .c2 { background: #7f7f7f; } .c3 { background: #880015; } .c4 { background: #ed1c24; } .c5 { background: #ff7f27; }
.c6 { background: #fff200; } .c7 { background: #22b14c; } .c8 { background: #00a2e8; } .c9 { background: #3f48cc; } .c10 { background: #a349a4; }
.c11 { background: #fff; } .c12 { background: #c3c3c3; } .c13 { background: #b97a57; } .c14 { background: #ffaec9; } .c15 { background: #ffc90e; }
.c16 { background: #efe4b0; } .c17 { background: #b5e61d; } .c18 { background: #99d9ea; } .c19 { background: #7092be; } .c20 { background: #c8bfe7; }

.rainbow { width: 37px; height: 37px; border: 1px solid #8d8d8d; box-shadow: inset 0 0 0 2px #fff; background: linear-gradient(to bottom, rgba(128,128,128,0) 10%, #7f7f7f 95%), linear-gradient(90deg, #f00, #ff0, #0f0, #0ff, #00f, #f0f, #f00); }
.tile3d { width: 38px; height: 38px; background: #fbfbfb; border: 1px solid #cfd2d5; display: flex; align-items: center; justify-content: center; }
.i-drop { width: 24px; height: 33px; }

.tooltip { position: absolute; left: 902px; top: -17px; width: 74px; height: 24px; background: #fff; border: 1px solid #767676; box-shadow: 2px 2px 3px rgba(0,0,0,.3); font-size: 13px; line-height: 22px; text-align: center; color: #575757; z-index: 2; }

/* workspace */
.gradient { background-image: linear-gradient(#c5cfe0 346px, #dbe5f3 977px); background-attachment: fixed; }
.workspace { height: 808px; display: flex; flex: none; background: #fff; }
.work-left { width: 1900px; height: 808px; padding-top: 6px; overflow: hidden; border-top: 1px solid #d6d7d9; border-right: 1px solid #fff; border-bottom: 1px solid #fff; }
.canvas-area { flex: 1; padding: 6px 0 0 5px; }
.canvas { position: relative; width: 590px; height: 116px; background: #fff; box-shadow: 8px 8px 10px rgba(90,110,140,.22); }
.handle { position: absolute; left: 293px; top: 116px; width: 5px; height: 5px; background: #fff; border: 1px solid #46586c; }

.vscroll { width: 20px; display: flex; flex-direction: column; background: #f0f0f0; }
.arrow-btn { height: 22px; display: flex; align-items: center; justify-content: center; flex: none; padding-top: 6px; background: #f0f0f0; }
.arrow-btn.end { margin-top: auto; padding-top: 0; }
.chev { width: 10px; height: 6px; }
.vthumb { height: 565px; background: #cdcdcd; flex: none; }

.hscroll { height: 19px; display: flex; background: #f0f0f0; flex: none; }
.harrow { width: 20px; display: flex; align-items: center; justify-content: center; flex: none; }
.harrow.right { margin-left: auto; width: 32px; transform: translateX(-17px); }
.chev-h { width: 6px; height: 10px; }
.hthumb { width: 1827px; background: #cdcdcd; }

.status { height: 33px; display: flex; background: #f0f0f0; border-top: 1px solid #dcdcdc; flex: none; font-size: 14px; color: #222; }
.cell { border-right: 1px solid #dcdcdc; display: flex; align-items: center; padding-left: 3px; flex: none; }
.cell-200 { width: 200px; gap: 5px; white-space: nowrap; }
.cell-200:nth-child(2), .cell-200:nth-child(3) { padding-left: 5px; }
.cell-size { width: 200px; padding-left: 6px; gap: 5px; }
.cell-grow { width: 875px; }
.i-status { width: 18px; height: 18px; }
.zoombox { flex: 1; display: flex; align-items: center; padding-left: 25px; }
.pct { width: 43px; }
.round { width: 20px; height: 20px; border: 1px solid #8d8d8d; border-radius: 50%; background: linear-gradient(#f7f7f7, #d8d8d8); color: #444; line-height: 16px; text-align: center; font-size: 16px; flex: none; }
.slider { position: relative; width: 105px; height: 5px; margin: 0 13px 0 14px; background: #e4e4e4; border: 1px solid #d5d5d5; flex: none; }
.knob { position: absolute; left: 45px; top: -10px; width: 13px; height: 23px; background: #0078d7; clip-path: polygon(0 0, 100% 0, 100% 75%, 50% 100%, 0 75%); }

/* taskbar */
.taskbar { height: 50px; display: flex; background: linear-gradient(90deg, #1a1715, #221d19 50%, #1a1715); flex: none; color: #fff; }
.start { width: 60px; background: #000; display: flex; align-items: center; justify-content: center; flex: none; }
.i-win { width: 20px; height: 20px; }
.search { width: 430px; background: #333; display: flex; align-items: center; padding-left: 11px; flex: none; }
.cortana { width: 28px; height: 28px; border-radius: 50%; border: 3px solid #e4e4e4; flex: none; }
.ask { margin-left: 11px; font-size: 17px; color: #a8a8a8; white-space: nowrap; }
.i-mic { width: 16px; height: 24px; margin-left: auto; margin-right: 18px; }
.taskview { width: 63px; display: flex; align-items: center; padding-left: 18px; flex: none; }
.i-taskview { width: 24px; height: 20px; }
.apps { display: flex; }
.app { position: relative; width: 62px; height: 50px; display: flex; align-items: center; justify-content: center; flex: none; }
.app.active { background: #444; }
.run::after { content: ""; position: absolute; left: 5px; right: 5px; bottom: 0; height: 3px; background: #f9e4c5; }
.app.active::after { left: 0; right: 0; }
.double::after { background: linear-gradient(90deg, #f9e4c5 79%, #8c8274 79%); }
.i-app { width: 30px; height: 30px; }
.tray { width: 375px; margin-left: auto; display: flex; align-items: center; flex: none; color: #e8e8e8; }
.t-people { width: 44px; display: flex; justify-content: center; }
.i-people { width: 20px; height: 20px; }
.t-chev { width: 30px; margin-left: 8px; display: flex; justify-content: center; }
.i-trayup { width: 16px; height: 9px; }
.t-30 { width: 30px; display: flex; justify-content: center; }
.t-28 { width: 28px; display: flex; justify-content: center; }
.i-battery { width: 20px; height: 14px; }
.i-wifi { width: 18px; height: 16px; }
.t-eng { width: 50px; text-align: center; font-size: 15px; }
.t-clock { width: 86px; display: flex; flex-direction: column; align-items: center; font-size: 14px; line-height: 23px; white-space: nowrap; }
.t-notif { position: relative; width: 56px; height: 40px; display: flex; justify-content: center; align-items: flex-start; padding-top: 5px; }
.i-bubble { width: 20px; height: 18px; }
.badge { position: absolute; left: 27px; top: 20px; width: 20px; height: 20px; border-radius: 50%; background: #333; color: #fff; text-align: center; line-height: 20px; font-size: 14px; }

/* floating window */
.pp-window { position: absolute; left: 473px; top: 245px; width: 981px; height: 741px; display: flex; flex-direction: column; background: #000; border: 1px solid #b39f6e; box-shadow: 0 0 18px rgba(0,0,0,.35); z-index: 5; }
.pp-window::after { content: ""; position: absolute; right: -3px; top: 96px; width: 2px; height: 40px; background: #cfc7b0; }
.pp-title { height: 38px; background: #fff; display: flex; align-items: center; padding: 0 1px 0 9px; flex: none; }
.i-pp { width: 20px; height: 16px; }
.pp-text { margin: 0 0 2px 5px; font-size: 14.3px; color: #111; white-space: nowrap; }
.pp-controls { margin-left: auto; display: flex; }
.pp-ctl { width: 58.5px; height: 38px; display: flex; align-items: center; justify-content: center; }
.pp-min { width: 12px; height: 1px; background: #000; margin-bottom: 2px; }
.pp-max { width: 12px; height: 12px; border: 1px solid #000; }
.pp-x { width: 12px; height: 12px; }
.pp-view { flex: 1; padding: 75px 0 0 248px; background: #000; }
.yellow { width: 502px; height: 502px; background: #ff0; }
```
